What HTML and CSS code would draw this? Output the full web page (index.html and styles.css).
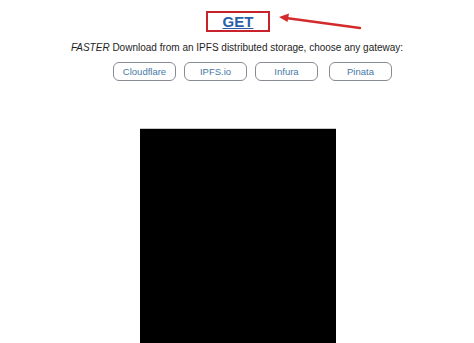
FILE: index.html
```html
<!DOCTYPE html>
<html>
<head>
<meta charset="utf-8">
<link rel="stylesheet" href="styles.css">
</head>
<body>
<div class="page">
  <div class="get-row">
    <a class="get-box" href="#">GET</a>
    <svg class="arrow" width="90" height="20" viewBox="0 0 90 20">
      <line x1="84" y1="15" x2="10" y2="5" stroke="#d32b2b" stroke-width="2.4" stroke-linecap="round"/>
      <polygon points="3,4 13,0.5 11.5,9" fill="#d32b2b"/>
    </svg>
  </div>
  <p class="lead"><i>FASTER</i> Download from an IPFS distributed storage, choose any gateway:</p>
  <div class="gateways">
    <a class="gw" href="#">Cloudflare</a>
    <a class="gw" href="#">IPFS.io</a>
    <a class="gw" href="#">Infura</a>
    <a class="gw gw-last" href="#">Pinata</a>
  </div>
  <div class="qr"></div>
</div>
</body>
</html>
```
FILE: styles.css
```css
html, body {
  margin: 0;
  padding: 0;
  background: #fff;
}
body {
  font-family: "Liberation Sans", Arial, sans-serif;
  color: #222;
  overflow: hidden;
  height: 343px;
}
.page {
  position: relative;
  display: flex;
  flex-direction: column;
  align-items: center;
  padding-top: 11px;
}
.get-row {
  position: relative;
  display: flex;
  justify-content: center;
}
.get-box {
  display: block;
  box-sizing: border-box;
  width: 64px;
  height: 21px;
  border: 2px solid #c8222c;
  text-align: center;
  font-size: 15px;
  font-weight: bold;
  line-height: 18px;
  color: #2a5fa8;
  text-decoration: underline;
  text-underline-offset: 1px;
  margin-left: 2px;
}
.arrow {
  position: absolute;
  left: 72px;
  top: 2px;
}
.lead {
  margin: 9px 0 0 0;
  font-size: 10px;
  line-height: 14px;
  color: #1e1e1e;
}
.gateways {
  display: flex;
  gap: 8px;
  margin-top: 7px;
  padding-left: 31px;
}
.gw {
  box-sizing: border-box;
  width: 63px;
  height: 19px;
  border: 1px solid #878c93;
  border-radius: 6px;
  font-size: 9.5px;
  line-height: 17px;
  text-align: center;
  color: #4679a6;
  text-decoration: none;
}
.gw-last {
  margin-left: 3px;
}
.qr {
  margin-top: 47px;
  width: 196px;
  height: 230px;
  background: #000;
  border-top: 1px solid #c8c8c8;
  margin-left: 2px;
}
```
